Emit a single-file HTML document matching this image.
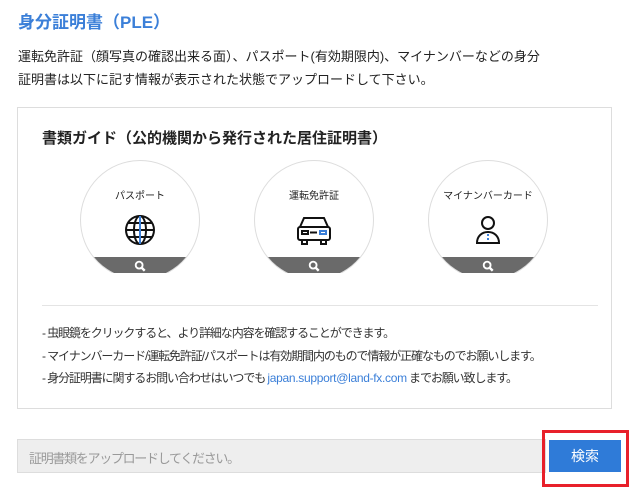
<!DOCTYPE html><html><head><meta charset="utf-8"><style>
body{margin:0;width:634px;height:488px;background:#fff;font-family:"Liberation Sans","Noto Sans CJK JP",sans-serif;position:relative;overflow:hidden;color:#222}
.a{position:absolute;white-space:nowrap}
.w{position:absolute;width:122px;height:113px;overflow:hidden}
.c{position:absolute;left:1px;top:0;width:118px;height:118px;border:1px solid #ddd;border-radius:50%;overflow:hidden;background:#fff}
.c .t{position:absolute;top:26px;width:100%;text-align:center;font-size:10px;color:#222}
.c .b{position:absolute;left:0;right:0;top:96px;height:30px;background:#6a6a6a}
.c svg.i{position:absolute;left:43px;top:53px}
.mg{position:absolute;left:53px;top:99px}
</style></head><body>
<div class="a" style="left:18px;top:8px;font-size:17px;font-weight:bold;color:#3b7fd8">身分証明書（PLE）</div>
<div class="a" style="left:18px;top:45px;font-size:13px;line-height:23px">運転免許証（顔写真の確認出来る面）、パスポート(有効期限内)、マイナンバーなどの身分<br>証明書は以下に記す情報が表示された状態でアップロードして下さい。</div>
<div class="a" style="left:17px;top:107px;width:593px;height:300px;border:1px solid #ddd"></div>
<div class="a" style="left:42px;top:127px;font-size:15px;font-weight:bold">書類ガイド（公的機関から発行された居住証明書）</div>

<div class="w" style="left:79px;top:160px"><div class="c"><div class="t">パスポート</div>
<svg class="i" width="32" height="32" viewBox="0 0 32 32" fill="none" stroke="#111" stroke-width="2"><circle cx="16" cy="16" r="14"/><ellipse cx="16" cy="16" rx="6" ry="14"/><path d="M2 16H30M4 9H28M4 23H28"/><path d="M16 2V30" stroke="#3b7fd8"/></svg>
<div class="b"></div><svg class="mg" width="12" height="12" viewBox="0 0 14 14"><circle cx="6" cy="6" r="4" fill="none" stroke="#fff" stroke-width="2.2"/><path d="M9 9L12.5 12.5" stroke="#fff" stroke-width="2.8"/></svg></div></div>

<div class="w" style="left:253px;top:160px"><div class="c"><div class="t">運転免許証</div>
<svg class="i" width="36" height="32" viewBox="0 0 36 32" fill="none" stroke="#111" stroke-width="2" style="left:41px"><path d="M8 4H28L32 13H4Z"/><rect x="2" y="13" width="32" height="13" rx="2"/><path d="M6 26V30H11V26M25 26V30H30V26"/><rect x="6" y="17" width="6" height="3"/><path d="M14 18.5H21"/><rect x="24" y="17" width="6" height="3" stroke="#3b7fd8"/></svg>
<div class="b"></div><svg class="mg" width="12" height="12" viewBox="0 0 14 14"><circle cx="6" cy="6" r="4" fill="none" stroke="#fff" stroke-width="2.2"/><path d="M9 9L12.5 12.5" stroke="#fff" stroke-width="2.8"/></svg></div></div>

<div class="w" style="left:427px;top:160px"><div class="c"><div class="t">マイナンバーカード</div>
<svg class="i" width="32" height="32" viewBox="0 0 32 32" fill="none" stroke="#111" stroke-width="2"><circle cx="16" cy="9" r="6"/><path d="M5 29C5 22 10 18 16 18C22 18 27 22 27 29Z"/><path d="M16 20V27" stroke="#3b7fd8" stroke-dasharray="2 2"/></svg>
<div class="b"></div><svg class="mg" width="12" height="12" viewBox="0 0 14 14"><circle cx="6" cy="6" r="4" fill="none" stroke="#fff" stroke-width="2.2"/><path d="M9 9L12.5 12.5" stroke="#fff" stroke-width="2.8"/></svg></div></div>

<div class="a" style="left:42px;top:305px;width:556px;height:1px;background:#e4e4e4"></div>
<div class="a" style="left:42px;top:322px;font-size:12px;letter-spacing:-1.1px;line-height:22.5px;color:#333">- 虫眼鏡をクリックすると、より詳細な内容を確認することができます。<br>- マイナンバーカード/運転免許証/パスポートは有効期間内のもので情報が正確なものでお願いします。<br>- 身分証明書に関するお問い合わせはいつでも <span style="color:#3b7fd8;letter-spacing:-0.3px">japan.support@land-fx.com</span> までお願い致します。</div>
<div class="a" style="left:17px;top:439px;width:527px;height:32px;background:#eee;border:1px solid #ddd"></div>
<div class="a" style="left:29px;top:448px;font-size:13px;letter-spacing:-1.3px;color:#999">証明書類をアップロードしてください。</div>
<div class="a" style="left:542px;top:430px;width:81px;height:51px;border:3px solid #e8202a"></div>
<div class="a" style="left:549px;top:440px;width:72px;height:32px;background:#2f7bd8;color:#fff;font-size:14px;text-align:center;line-height:32px">検索</div>
</body></html>
